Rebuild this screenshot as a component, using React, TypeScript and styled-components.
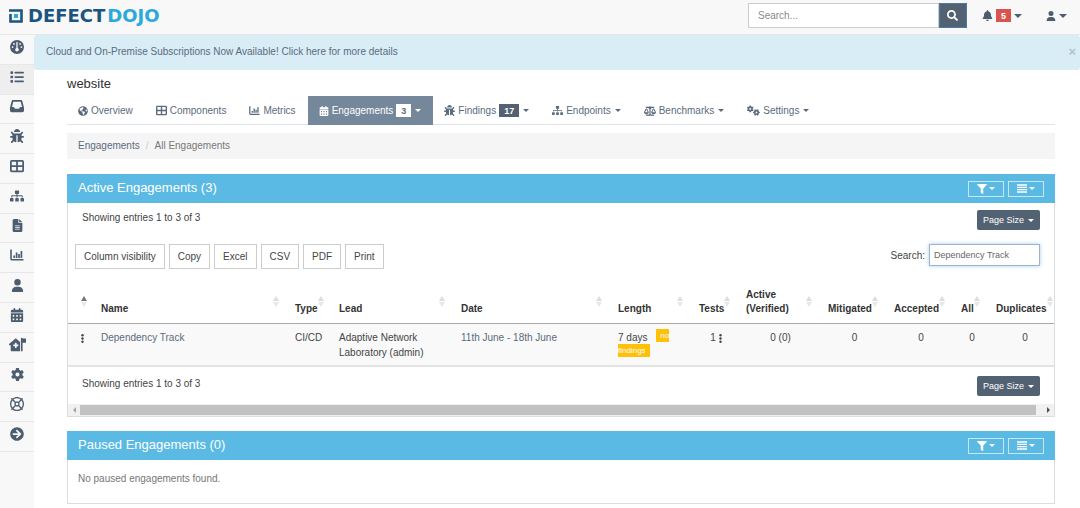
import React from 'react';
import styled, { createGlobalStyle, css } from 'styled-components';
import {
  FaArrowCircleRight, FaBalanceScale, FaBell, FaBug, FaFilter, FaGlobeAmericas, FaSearch, FaSitemap,
} from 'react-icons/fa';
import {
  FaCalendarDays, FaFileLines, FaGauge, FaGear, FaGears, FaHouseMedicalFlag, FaInbox, FaList, FaRegLifeRing,
  FaTableCellsLarge, FaUser,
} from 'react-icons/fa6';

const GlobalStyle = createGlobalStyle`
  *, *::before, *::after { box-sizing: border-box; }
  body {
    margin: 0;
    background: #fff;
    color: #444;
    font: 10px/15px "Liberation Sans", Arial, sans-serif;
  }
  button, input { font: inherit; color: inherit; margin: 0; }
  a { color: inherit; text-decoration: none; }
  svg { display: block; flex: none; }
`;

const Page = styled.div`
  display: flex;
  flex-direction: column;
  min-height: 100vh;
`;

const TopBar = styled.header`
  display: flex;
  align-items: center;
  height: 35px;
  padding: 0 13px 3px 9px;
  background: #f8f8f8;
  border-bottom: 1px solid #e7e7e7;
  color: #4c5d70;
`;

const Logo = styled.a`
  display: flex;
  align-items: center;
  gap: 5px;
  margin-right: auto;
`;

const Wordmark = styled.span`
  font: bold 18px/20px "DejaVu Sans", sans-serif;
  color: #1b5480;
`;

const WordmarkAccent = styled.span`
  margin-left: 2px;
  color: #2ba8dc;
`;

const SearchForm = styled.form`
  display: flex;
  width: 219px;
  height: 25px;
  margin-right: 15px;
`;

const SearchBox = styled.input`
  flex: 1;
  min-width: 0;
  padding: 0 9px;
  border: 1px solid #ccc;
  background: #fff;
  &::placeholder { color: #8a8a8a; }
`;

const SearchButton = styled.button`
  display: grid;
  place-items: center;
  width: 28px;
  padding: 0;
  border: 1px solid #4a7ba6;
  background: #536273;
  color: #fff;
`;

const Caret = styled.span<{ $large?: boolean }>`
  border: ${({ $large }) => ($large ? 4 : 3)}px solid transparent;
  border-top-color: currentColor;
  border-bottom: 0;
`;

const TopMenu = styled.button`
  display: flex;
  align-items: center;
  gap: 3px;
  padding: 0;
  border: 0;
  background: none;
  & + & { margin-left: 24px; }
`;

const Badge = styled.span<{ $tone: 'red' | 'white' | 'slate' }>`
  display: inline-block;
  height: 13px;
  padding: 0 5px;
  font-weight: bold;
  font-size: 9px;
  line-height: 14px;
  ${({ $tone }) => $tone === 'red' && css`background: #d9534f; color: #fff;`}
  ${({ $tone }) => $tone === 'white' && css`background: #fff; color: #5b6b7c;`}
  ${({ $tone }) => $tone === 'slate' && css`background: #536273; color: #fff;`}
`;

const Body = styled.div`
  display: flex;
  flex: 1;
`;

const SideBar = styled.nav`
  flex: none;
  width: 34px;
  background: #f8f8f8;
`;

const SideList = styled.ul`
  display: flex;
  flex-direction: column;
  height: 417px;
  margin: 0;
  padding: 0;
  list-style: none;
`;

const SideItem = styled.li<{ $active?: boolean }>`
  flex: 1;
  border-bottom: 1px solid #e7e7e7;
  background: ${({ $active }) => ($active ? '#eee' : 'transparent')};
`;

const SideLink = styled.a`
  display: grid;
  place-items: center;
  height: 100%;
  padding-bottom: 5px;
  color: #4c5d70;
`;

const Main = styled.main`
  flex: 1;
  min-width: 0;
`;

const Banner = styled.div`
  display: flex;
  align-items: center;
  justify-content: space-between;
  height: 35px;
  padding: 0 4px 2px 12px;
  border-radius: 3px;
  background: #d9edf7;
  color: #5b6b7c;
`;

const Dismiss = styled.button`
  padding: 0;
  border: 0;
  background: none;
  color: #adc3d0;
  font-size: 13px;
  font-weight: bold;
`;

const Content = styled.div`
  padding: 6px 25px 4px 33px;
`;

const Title = styled.h1`
  margin: 0 0 4px;
  color: #333;
  font-size: 13px;
  font-weight: normal;
  line-height: 16px;
`;

const Tabs = styled.nav`
  display: flex;
  margin-bottom: 8px;
  border-bottom: 1px solid #dfe3e8;
`;

const Tab = styled.a<{ $active?: boolean }>`
  display: flex;
  align-items: center;
  gap: 3px;
  height: 29px;
  margin-bottom: -1px;
  padding: 0 12px 0 11px;
  background: ${({ $active }) => ($active ? '#75879b' : 'transparent')};
  color: ${({ $active }) => ($active ? '#fff' : '#5b6b7c')};
  ${Caret} { margin-left: 1px; }
`;

const Crumbs = styled.ol`
  display: flex;
  margin: 0 0 15px;
  padding: 5px 11px 6px;
  list-style: none;
  background: #f5f5f5;
  color: #777;
`;

const Crumb = styled.li`
  a { color: #5b6b7c; }
  &:not(:first-child)::before { content: "/"; padding: 0 6px; color: #ccc; }
`;

const Panel = styled.section`
  border: 1px solid #ddd;
  border-top: 0;
  &:not(:last-child) { margin-bottom: 14px; }
`;

const PanelHead = styled.div`
  display: flex;
  align-items: center;
  gap: 4px;
  height: 29px;
  margin: 0 -1px;
  padding: 0 11px;
  background: #5bbae4;
  color: #fff;
`;

const PanelTitle = styled.h2`
  margin: 0 auto 0 0;
  padding-bottom: 2px;
  font-size: 13px;
  font-weight: normal;
`;

const HeadButton = styled.button`
  display: flex;
  align-items: center;
  justify-content: center;
  gap: 2px;
  width: 36px;
  height: 16px;
  padding: 0;
  border: 1px solid #c5e6f5;
  background: none;
`;

const Summary = styled.div`
  display: flex;
  justify-content: space-between;
  padding: 7px 14px 0;
`;

const PageSize = styled.button`
  display: flex;
  align-items: center;
  gap: 4px;
  height: 20px;
  padding: 0 6px;
  border: 0;
  border-radius: 2px;
  background: #536273;
  color: #fff;
  font-size: 9px;
`;

const Tools = styled.div`
  display: flex;
  gap: 4px;
  padding: 14px 14px 0 7px;
`;

const ToolButton = styled.button`
  height: 25px;
  padding: 0 8px 1px;
  border: 1px solid #ccc;
  background: #fff;
`;

const Filter = styled.label`
  display: flex;
  align-items: center;
  gap: 4px;
  height: 22px;
  margin-left: auto;
`;

const FilterBox = styled.input`
  width: 111px;
  height: 22px;
  padding: 0 4px;
  border: 1px solid #9db4cc;
  background: #fff;
  box-shadow: 0 0 4px #a9cdee;
  color: #666;
  font-size: 9px;
`;

const Table = styled.table`
  width: 100%;
  margin: 19px 0 2px;
  border-collapse: collapse;
  table-layout: fixed;
`;

const Col = styled.col<{ $width?: number }>`
  width: ${({ $width }) => ($width ? $width + 'px' : 'auto')};
`;

const HeadCell = styled.th`
  padding: 0 0 7px 13px;
  border-bottom: 1px solid #aaa;
  color: #333;
  text-align: left;
  vertical-align: bottom;
  line-height: 14px;
`;

const HeadLabel = styled.div`
  display: flex;
  align-items: flex-end;
  justify-content: space-between;
`;

const SortMark = styled.svg`
  margin: 0 3px 9px 0;
`;

const Cell = styled.td<{ $center?: boolean }>`
  height: 41px;
  padding: 6px 0 5px 13px;
  border-bottom: 2px solid #e4e4e4;
  background: #f9f9f9;
  line-height: 15px;
  text-align: ${({ $center }) => ($center ? 'center' : 'left')};
  vertical-align: top;
`;

const CellLink = styled.a`
  color: #5b6b7c;
`;

const RowMenu = styled.button`
  display: inline-block;
  padding: 0;
  border: 0;
  background: none;
  vertical-align: middle;
`;

const Tag = styled.span`
  margin-left: 6px;
  padding: 2px 4px;
  background: #ffc107;
  color: #fff;
  font-size: 8px;
  line-height: 9px;
  vertical-align: 3px;
`;

const ScrollTrack = styled.div`
  display: flex;
  align-items: center;
  height: 12px;
  margin-top: 8px;
  background: #f1f1f1;
`;

const ScrollArrow = styled.span<{ $dir: 'left' | 'right' }>`
  width: 12px;
  &::before {
    content: "";
    display: block;
    width: 3px;
    margin: 0 auto;
    border: 3px solid transparent;
    ${({ $dir }) => ($dir === 'left' ? 'border-right-color: #a3a3a3; border-left: 0;' : 'border-left-color: #505050; border-right: 0;')}
  }
`;

const ScrollThumb = styled.span`
  flex: 1;
  height: 10px;
  margin-right: 6px;
  background: #c1c1c1;
`;

const Empty = styled.p`
  margin: 0;
  padding: 11px 10px 17px;
  color: #777;
`;

const ChartIcon = ({ size = 14 }: { size?: number }) => (
  <svg width={size} height={size} viewBox="0 0 14 14" fill="none" stroke="currentColor">
    <path d="M1 1.500v9.200q0 1.100 1.100 1.100H13.500" strokeWidth="1.600" />
    <path d="M4.200 10V7.500M6.600 10V4.500M9 10V6M11.400 10V3" strokeWidth="1.700" />
  </svg>
);

const DotsIcon = () => (
  <svg width="3" height="9" viewBox="0 0 3 9" fill="currentColor">
    <circle cx="1.500" cy="1.300" r="1.200" />
    <circle cx="1.500" cy="4.500" r="1.200" />
    <circle cx="1.500" cy="7.700" r="1.200" />
  </svg>
);

const BarsIcon = () => (
  <svg width="10" height="9" viewBox="0 0 10 9" stroke="currentColor" strokeWidth="1.3">
    <path d="M0 1h10M0 3.300h10M0 5.700h10M0 8h10" />
  </svg>
);

const Sort = ({ asc }: { asc?: boolean }) => (
  <SortMark width="6" height="11" viewBox="0 0 6 11" aria-hidden="true">
    <path d="M3 0l3 5H0z" fill={asc ? '#777' : '#ddd'} />
    <path d="M3 11l3-5H0z" fill="#e8e8e8" />
  </SortMark>
);

const sideItems = [
  { name: 'Dashboard', icon: <FaGauge size={14} /> },
  { name: 'Products', icon: <FaList size={14} />, active: true },
  { name: 'Engagements', icon: <FaInbox size={14} /> },
  { name: 'Findings', icon: <FaBug size={14} /> },
  { name: 'Components', icon: <FaTableCellsLarge size={14} /> },
  { name: 'Endpoints', icon: <FaSitemap size={14} /> },
  { name: 'Reports', icon: <FaFileLines size={13} /> },
  { name: 'Metrics', icon: <ChartIcon /> },
  { name: 'Users', icon: <FaUser size={13} /> },
  { name: 'Calendar', icon: <FaCalendarDays size={14} /> },
  { name: 'Questionnaires', icon: <FaHouseMedicalFlag size={17} /> },
  { name: 'Configuration', icon: <FaGear size={13} /> },
  { name: 'Support', icon: <FaRegLifeRing size={14} /> },
  { name: 'Expand menu', icon: <FaArrowCircleRight size={14} /> },
];

const columns: { label: React.ReactNode; width?: number }[] = [
  { label: '', width: 20 },
  { label: 'Name' },
  { label: 'Type', width: 44 },
  { label: 'Lead', width: 122 },
  { label: 'Date', width: 157 },
  { label: 'Length', width: 81 },
  { label: 'Tests', width: 47 },
  { label: <>Active<br />(Verified)</>, width: 82 },
  { label: 'Mitigated', width: 66 },
  { label: 'Accepted', width: 67 },
  { label: 'All', width: 35 },
  { label: 'Duplicates', width: 71 },
];

const PanelHeader = ({ title }: { title: string }) => (
  <PanelHead>
    <PanelTitle>{title}</PanelTitle>
    <HeadButton aria-label="Filter"><FaFilter size={10} /><Caret /></HeadButton>
    <HeadButton aria-label="Options"><BarsIcon /><Caret /></HeadButton>
  </PanelHead>
);

const EntriesBar = () => (
  <Summary>
    <span>Showing entries 1 to 3 of 3</span>
    <PageSize>Page Size <Caret /></PageSize>
  </Summary>
);

export default function App() {
  return (
    <Page>
      <GlobalStyle />
      <TopBar>
        <Logo href="#" aria-label="DefectDojo">
          <svg width="14" height="14" viewBox="0 0 14 14" fill="none">
            <path d="M0 1.500h12.500v11H1.500V5" stroke="#1b5480" strokeWidth="2.600" />
            <rect x="5" y="5" width="4" height="4" fill="#2ba8dc" />
          </svg>
          <Wordmark>DEFECT<WordmarkAccent>DOJO</WordmarkAccent></Wordmark>
        </Logo>
        <SearchForm role="search">
          <SearchBox placeholder="Search..." aria-label="Search" />
          <SearchButton aria-label="Submit search"><FaSearch size={11} /></SearchButton>
        </SearchForm>
        <TopMenu aria-label="Notifications"><FaBell size={11} /><Badge $tone="red">5</Badge><Caret $large /></TopMenu>
        <TopMenu aria-label="Account"><FaUser size={10} /><Caret $large /></TopMenu>
      </TopBar>
      <Body>
        <SideBar aria-label="Main">
          <SideList>
            {sideItems.map(({ name, icon, active }) => (
              <SideItem key={name} $active={active}><SideLink href="#" aria-label={name}>{icon}</SideLink></SideItem>
            ))}
          </SideList>
        </SideBar>
        <Main>
          <Banner>
            <a href="#">Cloud and On-Premise Subscriptions Now Available! Click here for more details</a>
            <Dismiss aria-label="Close">×</Dismiss>
          </Banner>
          <Content>
            <Title>website</Title>
            <Tabs aria-label="Product">
              <Tab href="#"><FaGlobeAmericas size={10} />Overview</Tab>
              <Tab href="#"><FaTableCellsLarge size={11} />Components</Tab>
              <Tab href="#"><ChartIcon size={11} />Metrics</Tab>
              <Tab href="#" $active><FaCalendarDays size={10} />Engagements <Badge $tone="white">3</Badge><Caret /></Tab>
              <Tab href="#"><FaBug size={11} />Findings <Badge $tone="slate">17</Badge><Caret /></Tab>
              <Tab href="#"><FaSitemap size={11} />Endpoints <Caret /></Tab>
              <Tab href="#"><FaBalanceScale size={12} />Benchmarks <Caret /></Tab>
              <Tab href="#"><FaGears size={13} />Settings <Caret /></Tab>
            </Tabs>
            <Crumbs>
              <Crumb><a href="#">Engagements</a></Crumb>
              <Crumb>All Engagements</Crumb>
            </Crumbs>
            <Panel>
              <PanelHeader title="Active Engagements (3)" />
              <EntriesBar />
              <Tools>
                {['Column visibility', 'Copy', 'Excel', 'CSV', 'PDF', 'Print'].map((t) => <ToolButton key={t}>{t}</ToolButton>)}
                <Filter>Search:<FilterBox defaultValue="Dependency Track" /></Filter>
              </Tools>
              <Table>
                <colgroup>{columns.map((c, i) => <Col key={i} $width={c.width} />)}</colgroup>
                <thead>
                  <tr>
                    {columns.map((c, i) => (
                      <HeadCell key={i}><HeadLabel><span>{c.label}</span><Sort asc={i === 0} /></HeadLabel></HeadCell>
                    ))}
                  </tr>
                </thead>
                <tbody>
                  <tr>
                    <Cell><RowMenu aria-label="Actions"><DotsIcon /></RowMenu></Cell>
                    <Cell><CellLink href="#">Dependency Track</CellLink></Cell>
                    <Cell>CI/CD</Cell>
                    <Cell>Adaptive Network<br />Laboratory (admin)</Cell>
                    <Cell><CellLink href="#">11th June - 18th June</CellLink></Cell>
                    <Cell>7 days <Tag>no findings</Tag></Cell>
                    <Cell $center>1 <RowMenu aria-label="Test actions"><DotsIcon /></RowMenu></Cell>
                    <Cell $center>0 (0)</Cell>
                    <Cell $center>0</Cell>
                    <Cell $center>0</Cell>
                    <Cell $center>0</Cell>
                    <Cell $center>0</Cell>
                  </tr>
                </tbody>
              </Table>
              <EntriesBar />
              <ScrollTrack aria-hidden="true"><ScrollArrow $dir="left" /><ScrollThumb /><ScrollArrow $dir="right" /></ScrollTrack>
            </Panel>
            <Panel>
              <PanelHeader title="Paused Engagements (0)" />
              <Empty>No paused engagements found.</Empty>
            </Panel>
          </Content>
        </Main>
      </Body>
    </Page>
  );
}
